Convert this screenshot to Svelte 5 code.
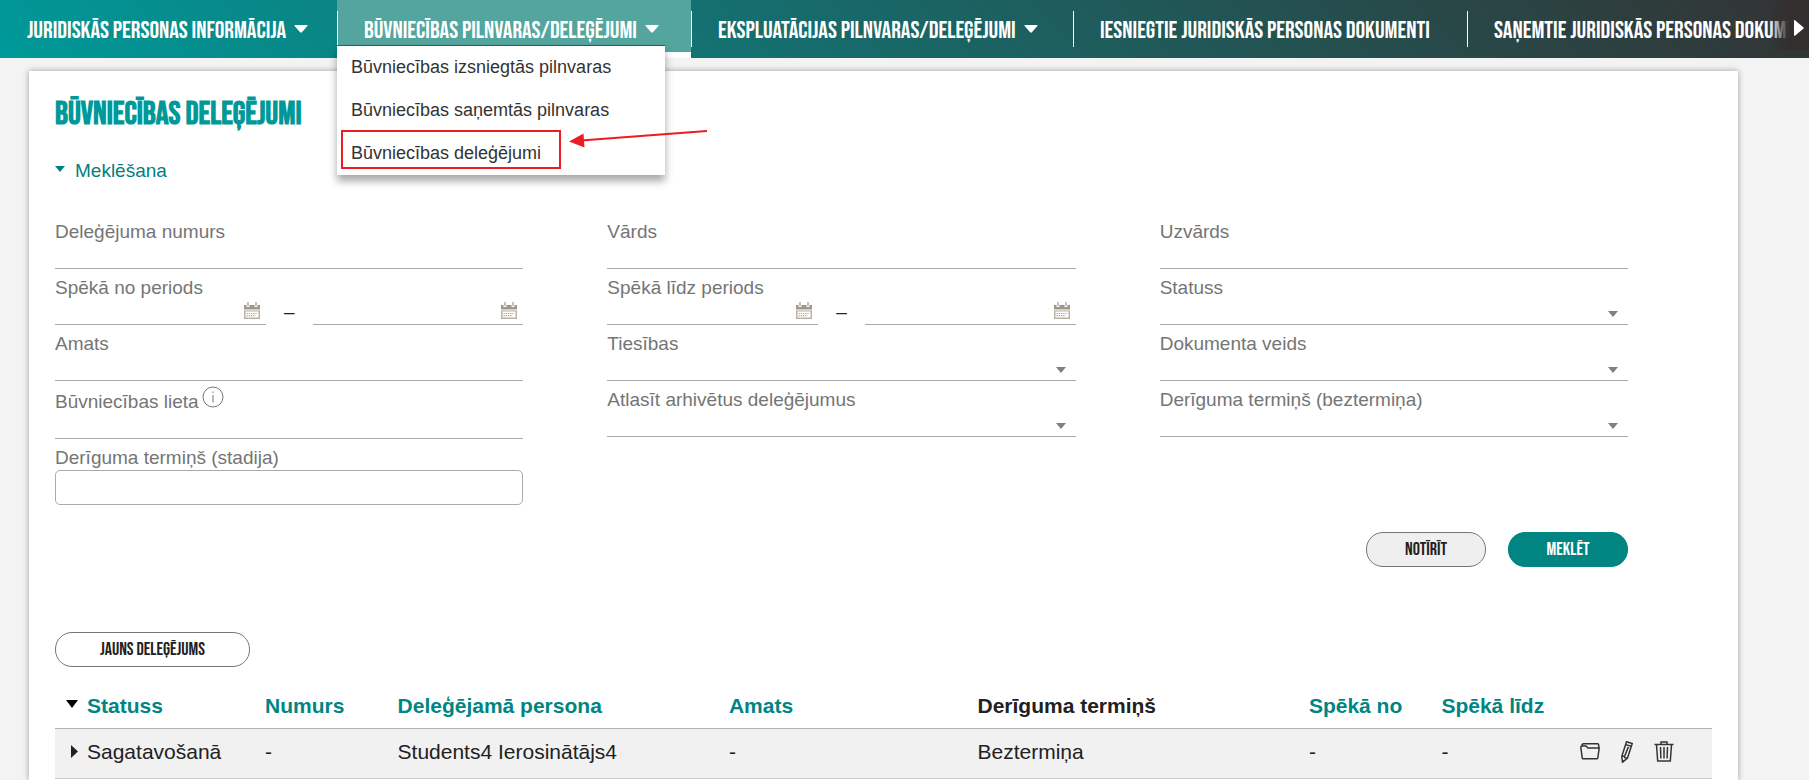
<script>
  const menu = ['Būvniecības izsniegtās pilnvaras', 'Būvniecības saņemtās pilnvaras', 'Būvniecības deleģējumi'];

  const columns = [
    [
      { id: 'numurs', label: 'Deleģējuma numurs', kind: 'text' },
      { id: 'speka-no', label: 'Spēkā no periods', kind: 'range' },
      { id: 'amats', label: 'Amats', kind: 'text' },
      { id: 'lieta', label: 'Būvniecības lieta', kind: 'text', info: true },
      { id: 'stadija', label: 'Derīguma termiņš (stadija)', kind: 'box' }
    ],
    [
      { id: 'vards', label: 'Vārds', kind: 'text' },
      { id: 'speka-lidz', label: 'Spēkā līdz periods', kind: 'range' },
      { id: 'tiesibas', label: 'Tiesības', kind: 'select' },
      { id: 'arhivetie', label: 'Atlasīt arhivētus deleģējumus', kind: 'select' }
    ],
    [
      { id: 'uzvards', label: 'Uzvārds', kind: 'text' },
      { id: 'statuss', label: 'Statuss', kind: 'select' },
      { id: 'veids', label: 'Dokumenta veids', kind: 'select' },
      { id: 'termins', label: 'Derīguma termiņš (beztermiņa)', kind: 'select' }
    ]
  ];

  const heads = ['Numurs', 'Deleģējamā persona', 'Amats', 'Derīguma termiņš', 'Spēkā no', 'Spēkā līdz'];
  const row = ['-', 'Students4 Ierosinātājs4', '-', 'Beztermiņa', '-', '-'];
</script>

{#snippet caret()}
  <svg class="caret" width="14" height="8" viewBox="0 0 14 8" aria-hidden="true"><path d="M1 0h12q1 0 .4.9L7.9 7.3q-.9.9-1.8 0L.6.9Q0 0 1 0z" fill="#fff" /></svg>
{/snippet}

{#snippet dateInput(id, label)}
  <span class="date">
    <input {id} type="text" aria-label={label} />
    <button type="button" aria-label="Kalendārs">
      <svg width="16" height="17" viewBox="0 0 16 17" aria-hidden="true">
        <path d="M0 3h16v14H0z" fill="#b9b1a6" />
        <path d="M0 3h16v4H0z" fill="#a0978a" />
        <path d="M0 7h16v2H0z" fill="#d5d0c8" />
        <path d="M1.500 9.500h13V15.500h-13z" fill="#fff" />
        <path d="M2.500 2.500h3v2.500h-3zM10.500 2.500h3v2.500h-3z" fill="#fff" />
        <path d="M4 0v4M12 0v4" stroke="#a0978a" stroke-width="1.200" />
        <path d="M2.500 11.500h11M2.500 13.700h9" stroke="#b0a89c" stroke-width="1.200" stroke-dasharray="1.400 .8" />
      </svg>
    </button>
  </span>
{/snippet}

<div class="page">
  <nav>
    <div class="item"><a href="#info">Juridiskās personas informācija</a>{@render caret()}</div>
    <div class="item active">
      <a href="#buve">Būvniecības pilnvaras/deleģējumi</a>{@render caret()}
      <ul class="menu">
        {#each menu as entry, i}
          <li><a href="#m{i}">{entry}</a></li>
        {/each}
      </ul>
      <svg class="callout" width="370" height="60" viewBox="0 0 370 60" aria-hidden="true">
        <rect x="5" y="16" width="218" height="37" fill="none" stroke="#ed1c24" stroke-width="2" />
        <path d="M370 16 244 25.500" stroke="#ed1c24" stroke-width="2" />
        <path d="M232 26.500 246.500 18.500 247.500 32.500z" fill="#ed1c24" />
      </svg>
    </div>
    <div class="item"><a href="#ekspl">Ekspluatācijas pilnvaras/deleģējumi</a>{@render caret()}</div>
    <div class="item"><a href="#iesn">Iesniegtie juridiskās personas dokumenti</a></div>
    <div class="item last"><a href="#san">Saņemtie juridiskās personas dokumenti</a></div>
    <button class="next" type="button" aria-label="Tālāk">
      <svg width="10" height="16" viewBox="0 0 10 16" aria-hidden="true"><path d="M0 1q0-1.500 1.300-.5L9.300 7.200q.8.8 0 1.600L1.300 15.500Q0 16.300 0 15z" fill="#fff" /></svg>
    </button>
  </nav>

  <main>
    <h1>Būvniecības deleģējumi</h1>
    <button class="toggle" type="button" aria-expanded="true">
      <svg width="10" height="6" viewBox="0 0 10 6" aria-hidden="true"><path d="M0 0h10L5 6z" fill="#008080" /></svg>
      Meklēšana
    </button>

    <form>
      <div class="columns">
        {#each columns as fields}
          <div class="column">
            {#each fields as f}
              <div class="field" class:tall={f.info}>
                <div class="caption">
                  <label for={f.id}>{f.label}</label>
                  {#if f.info}
                    <svg width="22" height="22" viewBox="0 0 22 22" fill="none" stroke="#777" aria-hidden="true"><circle cx="11" cy="11" r="10" /><path d="M11 9v7.500M11 5.500v1.500" /></svg>
                  {/if}
                </div>
                {#if f.kind === 'range'}
                  <div class="range">
                    {@render dateInput(f.id, f.label + ' no')}
                    <span class="dash">–</span>
                    {@render dateInput(f.id + '-beigas', f.label + ' līdz')}
                  </div>
                {:else if f.kind === 'select'}
                  <div class="select">
                    <select id={f.id}><option></option></select>
                    <svg width="10" height="6" viewBox="0 0 10 6" aria-hidden="true"><path d="M0 0h10L5 6z" fill="#808080" /></svg>
                  </div>
                {:else}
                  <input id={f.id} class:box={f.kind === 'box'} type="text" />
                {/if}
              </div>
            {/each}
          </div>
        {/each}
      </div>
      <div class="actions">
        <button class="pill grey" type="button">Notīrīt</button>
        <button class="pill teal" type="button">Meklēt</button>
      </div>
    </form>

    <button class="pill new" type="button">Jauns deleģējums</button>

    <table>
      <colgroup>
        <col class="c-status" /><col class="c-s" /><col class="c-l" /><col class="c-m" /><col class="c-l" /><col class="c-s" /><col class="c-s" /><col />
      </colgroup>
      <thead>
        <tr>
          <th><span class="first"><span class="mark sort"><svg width="12" height="8" viewBox="0 0 12 8" aria-hidden="true"><path d="M0 0h12L6 8z" /></svg></span>Statuss</span></th>
          {#each heads as h}
            <th class:plain={h === 'Derīguma termiņš'}>{h}</th>
          {/each}
          <th></th>
        </tr>
      </thead>
      <tbody>
        <tr>
          <td><span class="first"><span class="mark"><svg width="7" height="13" viewBox="0 0 7 13" aria-hidden="true"><path d="M0 0v13l7-6.500z" fill="#212121" /></svg></span>Sagatavošanā</span></td>
          {#each row as v}
            <td>{v}</td>
          {/each}
          <td>
            <div class="tools">
              <button type="button" aria-label="Atvērt">
                <svg width="20" height="17" viewBox="0 0 20 17"><path d="M2.300 15.500.8 4.300Q.8 3 2 3H6l2 2h11.200L17.800 15q-.1.700-.8.700H3q-.6 0-.7-.2zM1.800 3Q2 .8 3.500.8h14q1.200 0 1.200 1.200v3" /></svg>
              </button>
              <button type="button" aria-label="Labot">
                <svg width="12" height="22" viewBox="0 0 12 22"><path d="M5.500.8 11.200 2.500 6.500 17 1.500 21.300.8 15.300zM4.700 3.600l5.500 1.600M.8 15.300l2.500-.3.700 1.800 2.500.2M1.300 19.500l1.600.6M7.900 4.600 3.700 15" /></svg>
              </button>
              <button type="button" aria-label="Dzēst">
                <svg width="20" height="21" viewBox="0 0 20 21"><path d="M.5 3.500h19M7 3.300V1h6v2.300M2.500 4l1.200 16h12.600L17.500 4M6.500 6l.4 11.500M10 6v11.500M13.500 6l-.4 11.500" /></svg>
              </button>
            </div>
          </td>
        </tr>
      </tbody>
    </table>
  </main>
</div>

<style>
  :global(body) { margin: 0; background: #f3f3f3; }
  .page { display: flex; flex-direction: column; min-height: 100vh; font-family: "Liberation Sans", Arial, sans-serif; font-size: 19px; color: #212121; }
  button, input, select { font: inherit; margin: 0; padding: 0; border: 0; background: none; box-sizing: border-box; border-radius: 0; }
  button { cursor: pointer; }
  svg { display: block; flex: none; }

  nav { position: relative; z-index: 2; display: grid; grid-template-columns: 337fr 354fr 382fr 394fr minmax(0, 342fr); height: 58px; background: linear-gradient(45deg, #009999, #333333); }
  .item { position: relative; display: flex; align-items: center; gap: 8px; padding-left: 27px; white-space: nowrap; }
  .item + .item::before { content: ""; position: absolute; left: 0; top: 11px; width: 1px; height: 36px; background: #fff; }
  .item > a { color: #fff; text-decoration: none; text-transform: uppercase; font-family: "Bebas Neue", "Liberation Sans Narrow", "Liberation Sans", sans-serif; font-size: 24px; line-height: 28px; padding-top: 3px; }
  .item.active { background: linear-gradient(#53a59e 52px, #fff 52px); }
  .item.last { overflow: hidden; }
  .next { position: absolute; right: 0; top: 0; width: 40px; height: 50px; display: flex; align-items: center; justify-content: flex-end; padding: 5px 5px 0 0; background: linear-gradient(90deg, transparent, #332f2f 50%); }

  .menu { position: absolute; left: 0; top: 45px; width: 328px; margin: 0; padding: 0; list-style: none; background: #fff; border-top: 1px solid #00706f; box-shadow: 0 6px 8px rgba(0, 0, 0, 0.35); font-size: 18px; }
  .menu a { display: block; padding-left: 14px; line-height: 43px; color: #333; text-decoration: none; }
  .callout { position: absolute; left: 0; top: 115px; }

  main { flex: 1; margin: 13px 71px 0 29px; padding: 26px 26px 0; background: #fff; box-shadow: 0 0 6px rgba(0, 0, 0, 0.35); }
  h1 { margin: 0; font-family: "Bebas Neue", "Liberation Sans Narrow", "Liberation Sans", sans-serif; font-size: 32px; line-height: 36px; color: #009999; text-transform: uppercase; }
  .toggle { display: flex; align-items: center; gap: 10px; margin-top: 26px; line-height: 24px; color: #008080; }
  .toggle svg { margin-bottom: 4px; }

  form { margin-top: 30px; padding-right: 84px; }
  .columns { display: grid; grid-template-columns: repeat(3, minmax(0, 1fr)); column-gap: 84px; }
  .field { display: flex; flex-direction: column; padding-top: 7px; }
  .field.tall { padding-top: 9px; }
  .caption { display: flex; gap: 3px; height: 24px; line-height: 24px; color: #757575; }
  .caption svg { margin-top: -4px; }
  .field > input, .date, .select { height: 25px; border-bottom: 1px solid #aaa; box-sizing: border-box; }
  .field > input.box { height: 35px; border: 1px solid #aaa; border-radius: 5px; }
  .range { display: flex; }
  .date { display: flex; flex: 1; min-width: 0; align-items: flex-start; padding: 2px 6px 0 0; }
  .date input { flex: 1; min-width: 0; }
  .dash { width: 47px; text-align: center; line-height: 24px; height: 25px; }
  .select { position: relative; }
  .select select { width: 100%; height: 24px; appearance: none; }
  .select svg { position: absolute; right: 10px; top: 11px; pointer-events: none; }

  .actions { display: flex; justify-content: flex-end; gap: 22px; margin-top: 27px; }
  .pill { min-width: 120px; height: 35px; padding-bottom: 1px; border: 1px solid #767676; border-radius: 17px; font-family: "Bebas Neue", "Liberation Sans Narrow", "Liberation Sans", sans-serif; font-size: 18px; text-transform: uppercase; color: #212121; }
  .grey { background: #efefef; }
  .teal { background: #008583; border-color: #008583; color: #fff; }
  .new { display: block; margin-top: 65px; padding: 0 44px 1px; background: #fff; }

  table { width: 100%; margin-top: 17px; table-layout: fixed; border-collapse: collapse; font-size: 21px; }
  .c-status { width: 210px; }
  .c-s { width: 8%; }
  .c-m { width: 15%; }
  .c-l { width: 20%; }
  th, td { padding: 0; text-align: left; white-space: nowrap; }
  th { height: 44px; color: #008583; border-bottom: 1px solid #b3b3b3; }
  th.plain { color: #212121; }
  td { height: 45px; padding-bottom: 4px; background: #f1f1f1; border-bottom: 1px solid #ccc; }
  .first { display: flex; align-items: center; }
  .mark { display: flex; justify-content: flex-end; width: 23px; margin-right: 9px; }
  .sort { margin-bottom: 4px; }
  .tools { display: flex; align-items: center; gap: 21px; justify-content: flex-end; padding-right: 38px; }
  .tools svg { fill: none; stroke: #333; stroke-width: 1.5; }
</style>
